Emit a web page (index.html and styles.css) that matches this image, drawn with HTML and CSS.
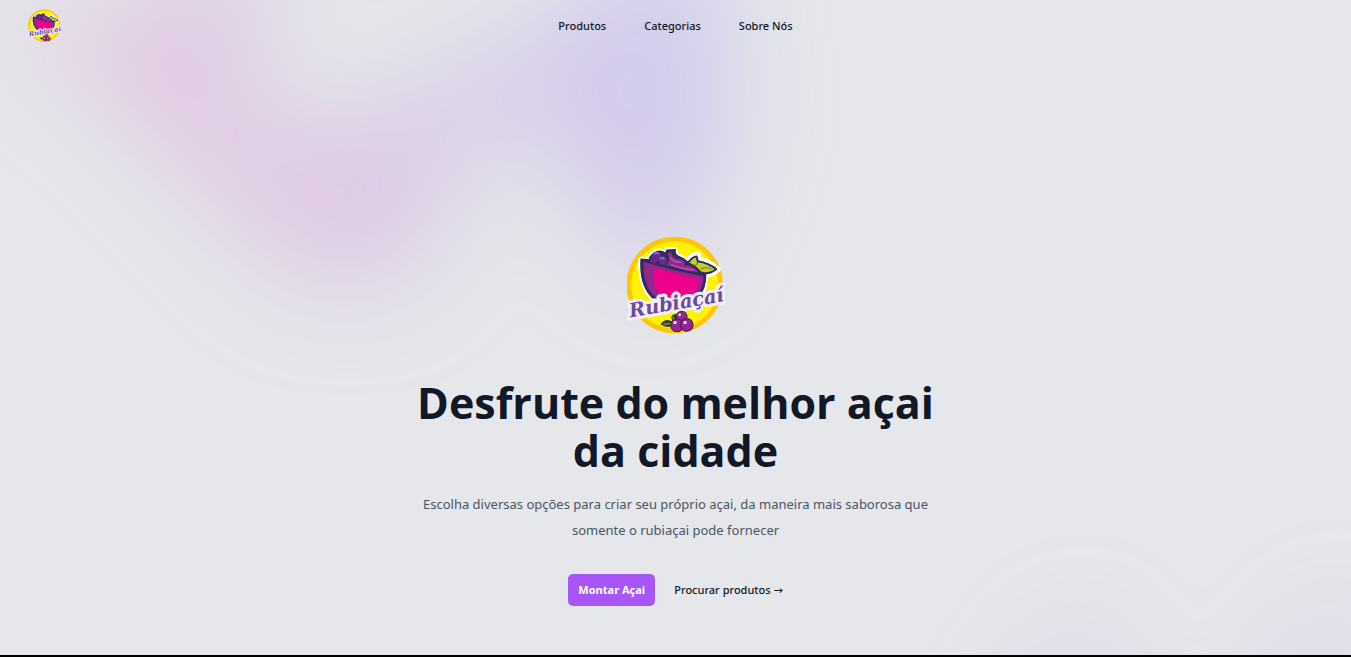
FILE: index.html
```html
<!DOCTYPE html>
<html lang="pt-BR">
<head>
<meta charset="utf-8">
<meta name="viewport" content="width=device-width, initial-scale=1">
<title>Rubiaçaí</title>
<link rel="stylesheet" href="styles.css">
</head>
<body>
<div class="page">
  <div class="glow glow-top" aria-hidden="true"><div class="glow-shape"></div></div>
  <div class="glow glow-bottom" aria-hidden="true"><div class="glow-shape"></div></div>

  <header class="header">
    <a class="brand" href="#" aria-label="Rubiaçaí"><svg class="brand-logo" viewBox="34 28 292 292" aria-hidden="true"><use href="#logo"/></svg></a>
    <nav class="nav">
      <a href="#">Produtos</a>
      <a href="#">Categorias</a>
      <a href="#">Sobre Nós</a>
    </nav>
  </header>

  <main class="hero">
    <svg class="hero-logo" viewBox="36 28 292 292" role="img" aria-label="Rubiaçaí">
      <g id="logo">
        <circle cx="178" cy="174" r="144" fill="#fdc60b"/>
        <circle cx="178" cy="174" r="130" fill="#fff200"/>
        <!-- white halo, dark outline, then the bowl itself -->
        <path d="M78 97 L102 99 Q106 82 124 75 Q138 70 151 80 L155 70 L180 69 Q176 82 188 88 Q202 93 212 102 L218 100 Q226 86 248 82 L251 98 Q284 105 307 128 Q290 142 270 145 Q272 182 250 212 L112 212 C80 180 75 140 78 97Z" fill="#fff" stroke="#fff" stroke-width="16" stroke-linejoin="round"/>
        <path d="M78 97 L102 99 Q106 82 124 75 Q138 70 151 80 L155 70 L180 69 Q176 82 188 88 Q202 93 212 102 L248 124 L270 141 C272 175 262 194 248 212 L112 212 C80 180 75 140 78 97Z" fill="#2e2d5b" stroke="#2e2d5b" stroke-width="4" stroke-linejoin="round"/>
        <path d="M86 105 Q165 130 264 148 C264 175 254 194 240 212 L122 212 C90 185 83 145 86 105Z" fill="#92278f"/>
        <path d="M117 124 Q184 137 252 157 C250 180 242 196 228 212 L140 212 C116 190 110 155 117 124Z" fill="#ec008c"/>
        <path d="M150 114 Q168 104 157 78 Q170 72 170 83 Q176 97 195 98 Q218 106 204 116 Q226 112 242 128 Q248 133 245 136 Q200 130 150 114Z" fill="#92278f"/>
        <path d="M164 90 Q174 108 199 106 M167 113 Q209 128 236 129" fill="none" stroke="#b05bb1" stroke-width="4"/>
        <circle cx="124" cy="88" r="13" fill="#662d91"/>
        <circle cx="116" cy="99" r="11" fill="#5c2d86"/>
        <circle cx="142" cy="101" r="13" fill="#662d91"/>
        <path d="M118 81 q7-5 13 0 M135 96 q7-5 12 1" fill="none" stroke="#a27abd" stroke-width="4"/>
        <path d="M218 109 Q228 91 243 89 L247 103 Q280 108 302 127 Q277 146 253 135 Q241 118 218 109Z" fill="#c3cf2d" stroke="#2e2d5b" stroke-width="6" stroke-linejoin="round"/>
        <path d="M247 105 Q246 113 237 116 M257 126 Q275 118 288 127" fill="none" stroke="#7b8b2a" stroke-width="4"/>
        <text class="logo-word" transform="translate(46 271) rotate(-10)">Rubiaçaí</text>
        <path d="M177 287 Q156 264 184 260 Q185 273 177 287Z M136 292 Q150 267 179 287 Q162 308 136 292Z" fill="#26452f"/>
        <path d="M144 291 L178 288 M172 268 L178 284" fill="none" stroke="#fff200" stroke-width="2"/>
        <g fill="#92278f" stroke="#4b1b5c" stroke-width="3">
          <circle cx="199" cy="268" r="16"/>
          <circle cx="185" cy="294" r="19"/>
          <circle cx="214" cy="293" r="19"/>
        </g>
        <g fill="#f4dff3">
          <circle cx="193" cy="263" r="4"/>
          <circle cx="179" cy="286" r="5"/>
          <circle cx="209" cy="286" r="5"/>
        </g>
      </g>
    </svg>
    <h1>Desfrute do melhor açai da cidade</h1>
    <p>Escolha diversas opções para criar seu próprio açai, da maneira mais saborosa que somente o rubiaçai pode fornecer</p>
    <div class="actions">
      <button class="primary" type="button">Montar Açai</button>
      <a class="secondary" href="#">Procurar produtos <span class="arrow" aria-hidden="true">→</span></a>
    </div>
  </main>
</div>
</body>
</html>
```
FILE: styles.css
```css
* {
  box-sizing: border-box;
}

body {
  margin: 0;
  font-family: "Open Sans", "Noto Sans", sans-serif;
  color: #111827;
  background: #e5e7eb;
}

a {
  color: inherit;
  text-decoration: none;
}

.logo-word {
  font: italic 700 58px "DejaVu Serif", serif;
  fill: #6f4a9c;
  stroke: #f3effa;
  stroke-width: 18px;
  stroke-linejoin: round;
  paint-order: stroke;
}

.page {
  position: relative;
  z-index: 0;
  display: flex;
  flex-direction: column;
  min-height: 100vh;
  overflow: hidden;
  border-bottom: 2px solid #000;
}

.glow {
  position: absolute;
  left: 0;
  right: 0;
  z-index: -1;
  overflow: hidden;
  filter: blur(51px);
}

.glow-top {
  top: -256px;
}

.glow-bottom {
  top: calc(100% - 230px);
}

.glow-shape {
  position: relative;
  left: calc(50% - 384px);
  width: 924px;
  aspect-ratio: 1155 / 678;
  transform: translateX(-50%) rotate(30deg);
  background: linear-gradient(to top right, #ff80b5, #9089fc);
  opacity: 0.3;
  clip-path: polygon(74.1% 44.1%, 100% 61.6%, 97.5% 26.9%, 85.5% 0.1%, 80.7% 2%, 72.5% 32.5%, 60.2% 62.4%, 52.4% 68.1%, 47.5% 58.3%, 45.2% 34.5%, 27.5% 76.7%, 0.1% 64.9%, 17.9% 100%, 27.6% 76.8%, 76.1% 97.7%, 74.1% 44.1%);
}

.glow-bottom .glow-shape {
  left: calc(50% + 461px);
  transform: translateX(-50%);
}

.header {
  display: grid;
  grid-template-columns: 1fr auto 1fr;
  align-items: center;
  padding: 9px 28px;
}

.brand {
  display: flex;
}

.brand-logo {
  width: 33px;
  height: 33px;
}

.nav {
  display: flex;
  gap: 38px;
  font-family: "Noto Sans", sans-serif;
  font-size: 11px;
  font-weight: 500;
  line-height: 20px;
}

.hero {
  display: flex;
  flex-direction: column;
  align-items: center;
  width: 100%;
  max-width: 538px;
  margin: auto;
  padding: 185px 0 0;
  text-align: center;
  flex: 1;
}

.hero-logo {
  width: 98px;
  height: 98px;
}

h1 {
  margin: 45px 0 0;
  font-size: 43px;
  font-weight: 700;
  line-height: 48px;
}

.hero p {
  margin: 16px 0 0;
  font-family: "Noto Sans", sans-serif;
  font-size: 13px;
  line-height: 26px;
  color: #4b5563;
}

.actions {
  display: flex;
  align-items: center;
  gap: 19px;
  margin-top: 31px;
  font-size: 11px;
  line-height: 16px;
}

.primary {
  padding: 8px 10px;
  border: 0;
  border-radius: 5px;
  font: inherit;
  font-weight: 700;
  color: #fff;
  background: #a855f7;
}

.secondary {
  font-family: "Noto Sans", sans-serif;
  font-weight: 500;
}

.arrow {
  font-family: "DejaVu Sans", sans-serif;
}
```
